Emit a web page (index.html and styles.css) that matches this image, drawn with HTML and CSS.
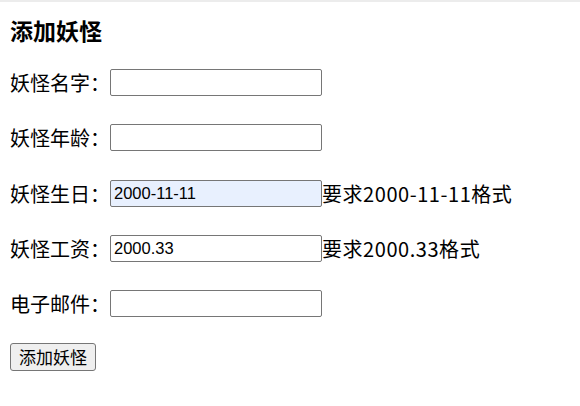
FILE: index.html
```html
<!DOCTYPE html>
<html lang="zh-CN">
<head>
<meta charset="utf-8">
<title>添加妖怪</title>
<link rel="stylesheet" href="styles.css">
</head>
<body>
<div class="topbar"></div>
<main class="page">
  <h2 class="title">添加妖怪</h2>
  <form class="form">
    <div class="row"><label class="label">妖怪名字：</label><input class="field" type="text"></div>
    <div class="row"><label class="label">妖怪年龄：</label><input class="field" type="text"></div>
    <div class="row"><label class="label">妖怪生日：</label><input class="field autofill" type="text" value="2000-11-11"><span class="hint">要求2000-11-11格式</span></div>
    <div class="row"><label class="label">妖怪工资：</label><input class="field" type="text" value="2000.33"><span class="hint">要求2000.33格式</span></div>
    <div class="row"><label class="label">电子邮件：</label><input class="field" type="text"></div>
    <div class="actions"><button class="btn" type="button">添加妖怪</button></div>
  </form>
</main>
</body>
</html>
```
FILE: styles.css
```css
html, body {
  margin: 0;
  padding: 0;
  background: #ffffff;
}
body {
  font-family: "Noto Sans CJK SC", "Noto Sans", sans-serif;
  color: #000;
}
.topbar {
  height: 2px;
  background: #ececec;
}
.page {
  padding: 0 10px;
}
.title {
  margin: 0;
  padding-top: 16px;
  font-size: 23px;
  line-height: 25px;
  font-weight: 700;
}
.form {
  display: flex;
  flex-direction: column;
  margin-top: 26px;
}
.row {
  display: flex;
  align-items: center;
  height: 27px;
  margin-bottom: 28.25px;
}
.label {
  width: 100px;
  font-size: 20px;
  line-height: 27px;
  white-space: nowrap;
}
.field {
  box-sizing: border-box;
  width: 212px;
  height: 27px;
  margin: 0;
  padding: 1px 3px 0;
  border: 1px solid #767676;
  border-radius: 2px;
  background: #fff;
  font-family: "Liberation Sans", Arial, sans-serif;
  font-size: 16.5px;
  color: #000;
  outline: none;
}
.autofill {
  background: #e8f0fe;
}
.hint {
  font-size: 20px;
  line-height: 27px;
  letter-spacing: 0.55px;
  white-space: nowrap;
}
.actions {
  margin-top: -2px;
}
.btn {
  box-sizing: border-box;
  width: 86px;
  height: 28px;
  margin: 0;
  padding: 0;
  border: 1px solid #767676;
  border-radius: 3px;
  background: #efefef;
  font-family: "Noto Sans CJK SC", sans-serif;
  font-size: 17px;
  line-height: 26px;
  color: #000;
}
```
